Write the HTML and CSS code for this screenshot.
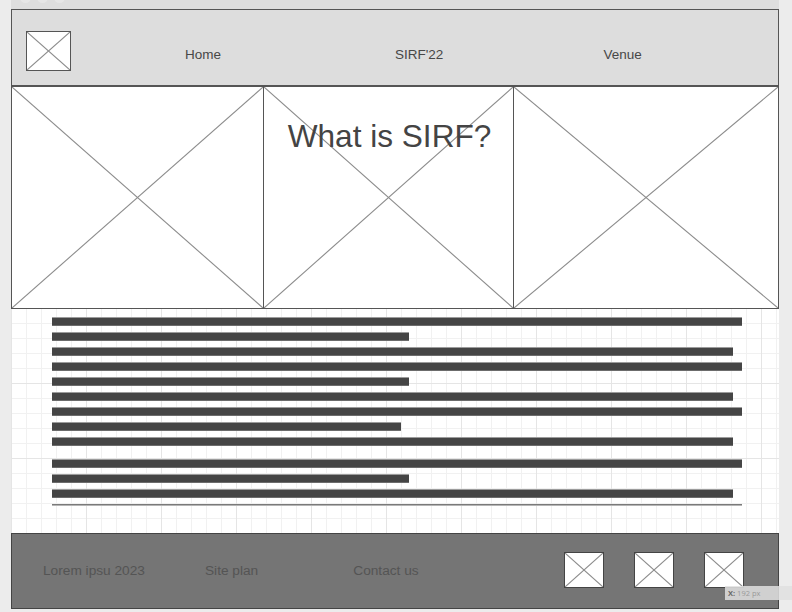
FILE: index.html
```html
<!DOCTYPE html>
<html lang="en">
<head>
<meta charset="utf-8">
<title>SIRF wireframe</title>
<link rel="stylesheet" href="styles.css">
</head>
<body>
<div class="topbar"><span class="dot"></span><span class="dot"></span><span class="dot"></span></div>
<div class="frame">
  <header class="header">
    <div class="ph logo"><svg class="x" viewBox="0 0 100 100" preserveAspectRatio="none"><line x1="0" y1="0" x2="100" y2="100"/><line x1="100" y1="0" x2="0" y2="100"/></svg></div>
    <nav class="nav">
      <a class="nav-link nav-home">Home</a>
      <a class="nav-link nav-sirf">SIRF'22</a>
      <a class="nav-link nav-venue">Venue</a>
    </nav>
  </header>
  <section class="hero">
    <div class="ph hero-box box-a"><svg class="x" viewBox="0 0 100 100" preserveAspectRatio="none"><line x1="0" y1="0" x2="100" y2="100"/><line x1="100" y1="0" x2="0" y2="100"/></svg></div>
    <div class="ph hero-box box-b"><svg class="x" viewBox="0 0 100 100" preserveAspectRatio="none"><line x1="0" y1="0" x2="100" y2="100"/><line x1="100" y1="0" x2="0" y2="100"/></svg><h1 class="title">What is SIRF?</h1></div>
    <div class="ph hero-box box-c"><svg class="x" viewBox="0 0 100 100" preserveAspectRatio="none"><line x1="0" y1="0" x2="100" y2="100"/><line x1="100" y1="0" x2="0" y2="100"/></svg></div>
  </section>
  <section class="content">
    <div class="bar bar-xl"></div>
    <div class="bar bar-s"></div>
    <div class="bar bar-l"></div>
    <div class="bar bar-xl"></div>
    <div class="bar bar-s"></div>
    <div class="bar bar-l"></div>
    <div class="bar bar-xl"></div>
    <div class="bar bar-xs"></div>
    <div class="bar bar-l"></div>
    <div class="bar bar-xl para"></div>
    <div class="bar bar-s"></div>
    <div class="bar bar-l"></div>
    <div class="rule"></div>
  </section>
  <footer class="footer">
    <span class="foot-text">Lorem ipsu 2023</span>
    <a class="foot-text foot-plan">Site plan</a>
    <a class="foot-text foot-contact">Contact us</a>
    <div class="icons">
      <div class="ph icon"><svg class="x" viewBox="0 0 100 100" preserveAspectRatio="none"><line x1="0" y1="0" x2="100" y2="100"/><line x1="100" y1="0" x2="0" y2="100"/></svg></div>
      <div class="ph icon"><svg class="x" viewBox="0 0 100 100" preserveAspectRatio="none"><line x1="0" y1="0" x2="100" y2="100"/><line x1="100" y1="0" x2="0" y2="100"/></svg></div>
      <div class="ph icon"><svg class="x" viewBox="0 0 100 100" preserveAspectRatio="none"><line x1="0" y1="0" x2="100" y2="100"/><line x1="100" y1="0" x2="0" y2="100"/></svg></div>
    </div>
  </footer>
</div>
<div class="tooltip"><b>X:</b> 192 px</div>
</body>
</html>
```
FILE: styles.css
```css
* { box-sizing: border-box; }
html, body { margin: 0; padding: 0; }
body {
  background: #ececec;
  font-family: "Liberation Sans", Arial, sans-serif;
  width: 792px;
  height: 612px;
  overflow: hidden;
  position: relative;
}
.topbar {
  margin-left: 11px;
  width: 768px;
  height: 9px;
  background: #dedede;
  display: flex;
  gap: 6px;
  padding-left: 9px;
  overflow: hidden;
}
.dot {
  width: 11px;
  height: 11px;
  border-radius: 50%;
  background: #e6e6e6;
  margin-top: -8px;
}
.frame {
  margin-left: 11px;
  width: 768px;
}
.ph {
  position: relative;
  background: #fff;
}
.x {
  position: absolute;
  inset: 0;
  width: 100%;
  height: 100%;
  display: block;
}
.x line {
  stroke: #8c8c8c;
  stroke-width: 1.1;
  vector-effect: non-scaling-stroke;
}
.header {
  height: 77px;
  background: #dddddd;
  border: 1px solid #555;
  display: flex;
  align-items: flex-start;
  padding: 21px 0 0 14px;
}
.logo {
  width: 45px;
  height: 40px;
  border: 1px solid #555;
}
.nav {
  display: flex;
  padding-top: 16px;
}
.nav-link {
  font-size: 13.5px;
  color: #474747;
  text-decoration: none;
}
.nav-home { margin-left: 114px; }
.nav-sirf { margin-left: 174px; }
.nav-venue { margin-left: 160px; }
.hero {
  display: grid;
  grid-template-columns: 252px 250px 1fr;
  height: 223px;
}
.hero-box {
  border-top: 1px solid #555;
  border-bottom: 1px solid #555;
  border-left: 1px solid #555;
}
.box-c { border-right: 1px solid #555; }
.title {
  position: relative;
  margin: 0;
  padding-top: 31px;
  padding-left: 2px;
  text-align: center;
  font-size: 31.6px;
  font-weight: normal;
  color: #444;
}
.content {
  height: 224px;
  background-color: #fff;
  background-image:
    linear-gradient(to right, #e5e5e5 1px, transparent 1px),
    linear-gradient(to bottom, #e5e5e5 1px, transparent 1px),
    linear-gradient(to right, #f1f1f1 1px, transparent 1px),
    linear-gradient(to bottom, #f1f1f1 1px, transparent 1px);
  background-size: 75px 75px, 75px 75px, 15px 15px, 15px 15px;
  background-position: 0 -1px;
  padding: 8px 0 0 41px;
  display: flex;
  flex-direction: column;
  align-items: flex-start;
  gap: 6px;
}
.bar {
  height: 9px;
  background: #454545;
  border-top: 1px solid #9c9c9c;
  border-bottom: 1px solid #6c6c6c;
}
.bar-xl { width: 690px; }
.bar-l { width: 681px; }
.bar-s { width: 357px; }
.bar-xs { width: 349px; }
.para { margin-top: 7px; }
.rule {
  width: 690px;
  height: 2px;
  background: #7a7a7a;
  border-bottom: 1px solid #b5b5b5;
}
.footer {
  height: 76px;
  background: #757575;
  border: 1px solid #444;
  display: flex;
  align-items: center;
  padding: 0 34px 2px 31px;
}
.foot-text {
  font-size: 13.7px;
  color: #545454;
  text-decoration: none;
}
.foot-plan { margin-left: 60px; }
.foot-contact { margin-left: 95px; }
.icons {
  margin-left: auto;
  display: flex;
  gap: 30px;
}
.icon {
  width: 40px;
  height: 36px;
  border: 1px solid #444;
}
.tooltip {
  position: absolute;
  left: 725px;
  top: 586px;
  width: 67px;
  height: 14px;
  background: rgba(225, 225, 225, 0.85);
  font-family: "Open Sans", "DejaVu Sans", sans-serif;
  font-size: 7.5px;
  line-height: 14px;
  color: #999;
  padding-left: 3px;
}
.tooltip b { color: #666; }
```
